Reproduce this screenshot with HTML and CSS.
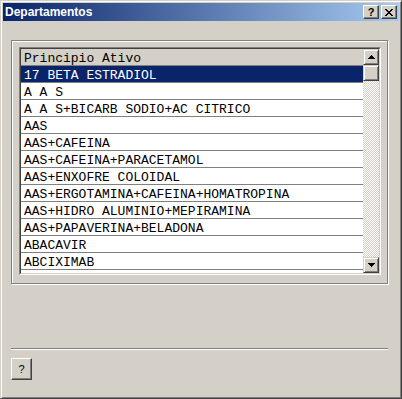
FILE: index.html
```html
<!DOCTYPE html>
<html>
<head>
<meta charset="utf-8">
<link rel="stylesheet" href="styles.css">
</head>
<body>
<div class="window">
  <div class="titlebar">
    <span class="title">Departamentos</span>
    <div class="caption-btns">
      <div class="cap-btn help-cap">?</div>
      <div class="cap-btn close-cap">
        <svg width="8" height="7" viewBox="0 0 8 7" shape-rendering="crispEdges">
          <path d="M0 0h2v1h-2zM6 0h2v1h-2zM1 1h2v1h-2zM5 1h2v1h-2zM2 2h4v1h-4zM3 3h2v1h-2zM2 4h4v1h-4zM1 5h2v1h-2zM5 5h2v1h-2zM0 6h2v1h-2zM6 6h2v1h-2z" fill="#000"/>
        </svg>
      </div>
    </div>
  </div>
  <div class="content">
    <div class="group">
      <div class="list">
        <div class="list-inner">
          <div class="rows">
            <div class="row header">Principio Ativo</div>
            <div class="row selected">17 BETA ESTRADIOL</div>
            <div class="row">A A S</div>
            <div class="row">A A S+BICARB SODIO+AC CITRICO</div>
            <div class="row">AAS</div>
            <div class="row">AAS+CAFEINA</div>
            <div class="row">AAS+CAFEINA+PARACETAMOL</div>
            <div class="row">AAS+ENXOFRE COLOIDAL</div>
            <div class="row">AAS+ERGOTAMINA+CAFEINA+HOMATROPINA</div>
            <div class="row">AAS+HIDRO ALUMINIO+MEPIRAMINA</div>
            <div class="row">AAS+PAPAVERINA+BELADONA</div>
            <div class="row">ABACAVIR</div>
            <div class="row">ABCIXIMAB</div>
          </div>
          <div class="scrollbar">
            <div class="sb-btn">
              <svg width="7" height="4" viewBox="0 0 7 4" shape-rendering="crispEdges"><path d="M3 0h1v1h-1zM2 1h3v1h-3zM1 2h5v1h-5zM0 3h7v1h-7z" fill="#000"/></svg>
            </div>
            <div class="sb-thumb"></div>
            <div class="sb-track"></div>
            <div class="sb-btn">
              <svg width="7" height="4" viewBox="0 0 7 4" shape-rendering="crispEdges"><path d="M0 0h7v1h-7zM1 1h5v1h-5zM2 2h3v1h-3zM3 3h1v1h-1z" fill="#000"/></svg>
            </div>
          </div>
        </div>
      </div>
    </div>
    <div class="separator"></div>
    <div class="help-btn">?</div>
  </div>
</div>
</body>
</html>
```
FILE: styles.css
```css
html, body {
  margin: 0;
  padding: 0;
  background: #d4d0c8;
}

.window {
  width: 402px;
  height: 399px;
  box-sizing: border-box;
  background: #d4d0c8;
  border: 1px solid;
  border-color: #d4d0c8 #404040 #404040 #d4d0c8;
  box-shadow: inset 1px 1px #fff, inset -1px -1px #808080;
  padding: 2px;
  display: flex;
  flex-direction: column;
}

.titlebar {
  height: 18px;
  flex: none;
  background: linear-gradient(to right, #0a246a, #a6caf0);
  display: flex;
  align-items: center;
  justify-content: space-between;
  padding: 0 2px 0 2px;
}

.title {
  color: #fff;
  font-family: "Liberation Sans", Arial, sans-serif;
  font-weight: bold;
  font-size: 12px;
  line-height: 14px;
}

.caption-btns {
  display: flex;
  gap: 2px;
}

.cap-btn {
  width: 16px;
  height: 14px;
  box-sizing: border-box;
  background: #d4d0c8;
  border: 1px solid;
  border-color: #fff #404040 #404040 #fff;
  box-shadow: inset -1px -1px #808080;
  display: flex;
  align-items: center;
  justify-content: center;
}

.help-cap {
  font-family: "Liberation Sans", Arial, sans-serif;
  font-weight: bold;
  font-size: 11px;
  line-height: 11px;
  color: #000;
}

.content {
  flex: 1;
  display: flex;
  flex-direction: column;
  padding-left: 8px;
}

.group {
  margin-top: 19px;
  width: 377px;
  height: 244px;
  box-sizing: border-box;
  border: 1px solid #808080;
  box-shadow: inset 1px 1px #fff, 1px 1px #fff;
  padding: 6px 6px 8px 7px;
}

.list {
  width: 362px;
  height: 228px;
  box-sizing: border-box;
  border: 1px solid;
  border-color: #808080 #fff #fff #808080;
}

.list-inner {
  height: 100%;
  box-sizing: border-box;
  border: 1px solid;
  border-color: #404040 #d4d0c8 #d4d0c8 #404040;
  display: flex;
  background: #fff;
}

.rows {
  flex: 1;
  overflow: hidden;
  font-family: "Liberation Mono", "Courier New", monospace;
  font-size: 13px;
}

.row {
  height: 14px;
  padding-top: 2px;
  line-height: 16px;
  border-bottom: 1px solid #808080;
  padding-left: 3px;
  color: #000;
  white-space: pre;
}

.row.header {
  background: #d4d0c8;
}

.row.selected {
  background: #0a246a;
  color: #fff;
}

.scrollbar {
  width: 16px;
  flex: none;
  display: flex;
  flex-direction: column;
}

.sb-btn, .sb-thumb {
  width: 16px;
  height: 16px;
  flex: none;
  box-sizing: border-box;
  background: #d4d0c8;
  border: 1px solid;
  border-color: #d4d0c8 #404040 #404040 #d4d0c8;
  box-shadow: inset 1px 1px #fff, inset -1px -1px #808080;
  display: flex;
  align-items: center;
  justify-content: center;
}

.sb-track {
  flex: 1;
  background-color: #fff;
  background-image: conic-gradient(#d4d0c8 25%, #fff 0 50%, #d4d0c8 0 75%, #fff 0);
  background-size: 2px 2px;
}

.separator {
  margin-top: 64px;
  width: 377px;
  height: 0;
  border-top: 1px solid #808080;
  border-bottom: 1px solid #fff;
}

.help-btn {
  margin-top: 8px;
  width: 21px;
  height: 22px;
  box-sizing: border-box;
  background: #d4d0c8;
  border: 1px solid;
  border-color: #fff #404040 #404040 #fff;
  box-shadow: inset -1px -1px #808080;
  display: flex;
  align-items: center;
  justify-content: center;
  font-family: "Liberation Sans", Arial, sans-serif;
  font-size: 11px;
  color: #000;
}
```
